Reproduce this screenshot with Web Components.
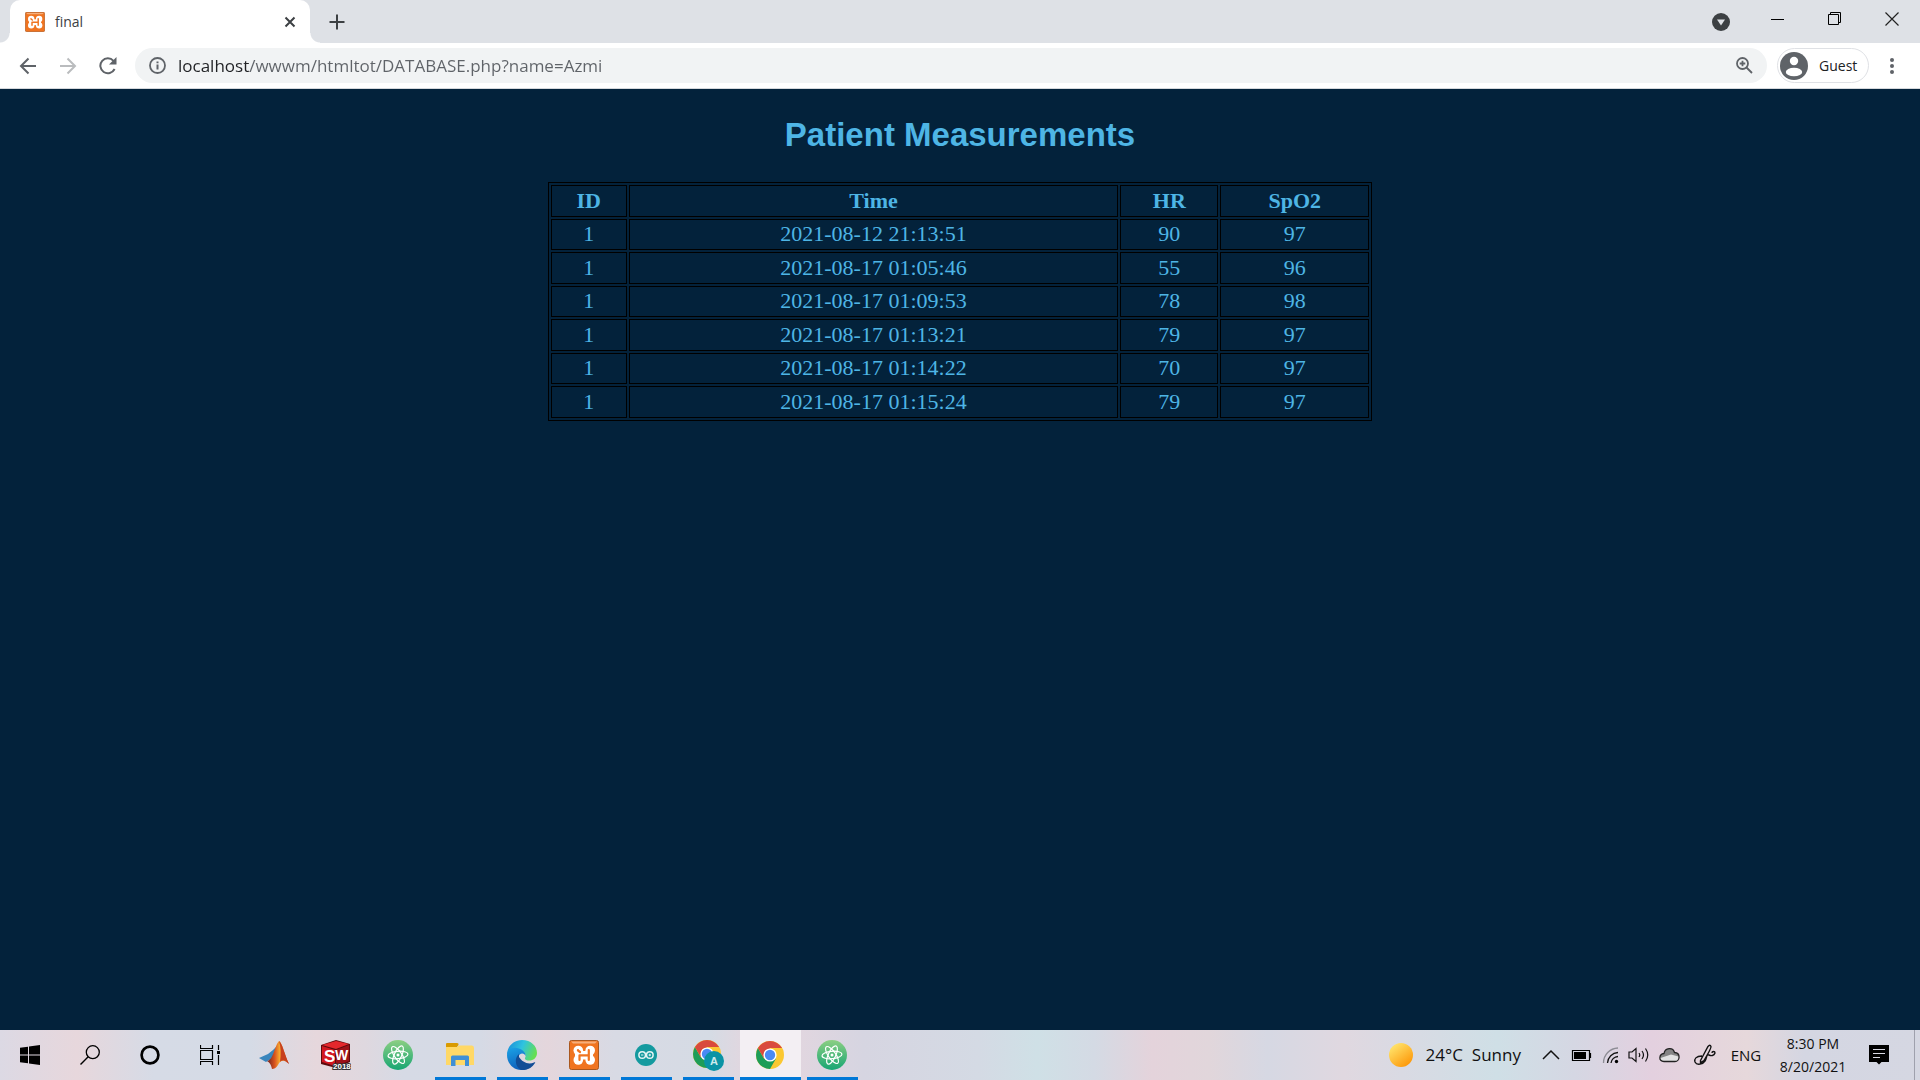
<!DOCTYPE html>
<html lang="en">
<head>
<meta charset="utf-8">
<title>final</title>
<style>
html,body{margin:0;height:100%}
body{font-family:"Open Sans","Noto Sans",sans-serif;background:#03223b;overflow:hidden}
</style>
</head>
<body>
<desktop-screen></desktop-screen>
<script>
function define(name, css, html){
  const t=document.createElement('template');
  t.innerHTML='<style>*{box-sizing:border-box}svg{display:block}button{font:inherit;color:inherit;background:none;border:0;padding:0;margin:0;display:flex;align-items:center;justify-content:center}'+css+'</style>'+html;
  customElements.define(name,class extends HTMLElement{
    constructor(){super();this.attachShadow({mode:'open'}).append(t.content.cloneNode(true));}
  });
}
const xampp='<svg width="100%" height="100%" viewBox="0 0 30 30"><rect x=".5" y=".5" width="29" height="29" rx="2" fill="#f07420" stroke="#a9571f"/><path d="M2 1.500H28L26 3.500H4Z" fill="#f9c9a2" opacity=".7"/><g fill="#fff"><circle cx="9.300" cy="10.500" r="4.800"/><circle cx="21.200" cy="10.500" r="4.800"/><circle cx="9.300" cy="20" r="4.800"/><circle cx="21.200" cy="20" r="4.800"/><rect x="6" y="11" width="18" height="8.500"/></g><path d="M9 10V10.500L11 12M19.800 10V20M10.500 15.300H19.800M10.500 15.300V20" fill="none" stroke="#f07420" stroke-width="2.200" stroke-linecap="round"/></svg>';
const atom='<svg width="30" height="30" viewBox="0 0 30 30"><defs><linearGradient id="a" x2="0" y2="1"><stop stop-color="#8ccf83"/><stop offset="1" stop-color="#17a673"/></linearGradient></defs><circle cx="15" cy="15" r="15" fill="url(#a)"/><g fill="none" stroke="#fff" stroke-width="1.200"><ellipse cx="15" cy="15" rx="10" ry="3.700" transform="rotate(-5 15 15)"/><ellipse cx="15" cy="15" rx="10" ry="3.700" transform="rotate(55 15 15)"/><ellipse cx="15" cy="15" rx="10" ry="3.700" transform="rotate(115 15 15)"/></g><circle cx="15" cy="15" r="1.500" fill="#fff"/></svg>';
const chrome='<svg width="28" height="28" viewBox="0 0 28 28"><circle cx="14" cy="14" r="14" fill="#fbc831"/><path d="M1.900 7A14 14 0 0 0 14 28L20 17.500L14 14L8 17.500Z" fill="#1d9d58"/><path d="M1.900 7A14 14 0 0 1 26.100 7H14L8 17.500Z" fill="#d94a3d"/><circle cx="14" cy="14" r="6.600" fill="#fff"/><circle cx="14" cy="14" r="5.200" fill="#4a8af4"/></svg>';

define('browser-tab',`
:host{display:flex;align-items:center;width:300px;height:43px;padding:0 13px 0 15px;margin-left:10px;background:#fff;border-radius:10px 10px 0 0;position:relative;color:#3c4043;font-size:14px;line-height:20px}
:host::before,:host::after{content:"";position:absolute;bottom:0;width:10px;height:10px}
:host::before{left:-10px;background:radial-gradient(circle at 0 0,#dee1e6 9px,#fff 10px)}
:host::after{right:-10px;background:radial-gradient(circle at 100% 0,#dee1e6 9px,#fff 10px)}
i{width:20px;height:20px;margin-right:10px}
span{flex:1}button{width:14px;height:20px}`,
`<i>${xampp}</i><span><slot></slot></span><button aria-label="Close tab"><svg width="12" height="12" viewBox="0 0 12 12"><path d="M1.500 1.500L10.500 10.500M10.500 1.500L1.500 10.500" stroke="#3c4043" stroke-width="2"/></svg></button>`);

define('tab-strip',`
:host{display:flex;height:43px;background:#dee1e6}
.plus{width:30px;height:43px;margin-left:12px}
.win{margin-left:auto;display:flex;height:38px}
.win button{width:57px;height:38px}
.win .down{width:56px;padding-top:5px}`,
`<browser-tab>final</browser-tab><button class="plus" aria-label="New tab"><svg width="16" height="16" viewBox="0 0 16 16"><path d="M8 .5V15.500M.5 8H15.500" stroke="#3c4043" stroke-width="2"/></svg></button>
<div class="win"><button class="down" aria-label="Search tabs"><svg width="18" height="18" viewBox="0 0 18 18"><circle cx="9" cy="9" r="9" fill="#3c4043"/><path d="M5 6.500H13L9 12.500Z" fill="#dee1e6"/></svg></button>
<button aria-label="Minimize"><svg width="14" height="14"><path d="M0 7.500H13" stroke="#000"/></svg></button>
<button aria-label="Restore"><svg width="14" height="14"><path d="M.5 2.500H10.500V12.500H.5ZM2.500 2.500V.5H12.500V10.500H10.500" fill="none" stroke="#000"/></svg></button>
<button aria-label="Close"><svg width="14" height="14"><path d="M.5 .5L13.500 13.500M13.500 .5L.5 13.500" stroke="#222" stroke-width="1.200"/></svg></button></div>`);

define('address-bar',`
:host{display:flex;align-items:center;height:46px;background:#fff;border-bottom:1px solid #d5d8dc;padding:0 16px 0 8px}
.nav{width:40px;height:36px}
.box{flex:1;display:flex;align-items:center;height:35px;border-radius:18px;background:#f1f3f4;margin:0 10px 0 7px;padding:0 14px}
input{flex:1;min-width:0;height:24px;margin:0 0 0 12px;padding:0;border:0;outline:0;font:inherit;font-size:17px;line-height:24px;color:#5f6368;-webkit-text-fill-color:transparent;background:linear-gradient(90deg,#202124 72px,#5f6368 72px);-webkit-background-clip:text;background-clip:text}
.guest{height:35px;width:92px;border:1px solid #dfe1e5;border-radius:18px;justify-content:flex-start;padding-left:2px;font-size:14px;line-height:20px;color:#202124;gap:11px}
.more{width:24px;height:36px;margin-left:11px}`,
`<button class="nav" aria-label="Back"><svg width="18" height="18" viewBox="0 0 18 18"><path d="M17 9H2M9.500 1.500L2 9L9.500 16.500" fill="none" stroke="#5f6368" stroke-width="2"/></svg></button>
<button class="nav" aria-label="Forward"><svg width="18" height="18" viewBox="0 0 18 18"><path d="M1 9H16M8.500 1.500L16 9L8.500 16.500" fill="none" stroke="#babcbe" stroke-width="2"/></svg></button>
<button class="nav" aria-label="Reload"><svg width="18" height="18" viewBox="0 0 18 18"><path d="M15.600 12A7.500 7.500 0 1 1 14.500 3.800L16 5.500" fill="none" stroke="#5f6368" stroke-width="2"/><path d="M17.500 0V7.500H10Z" fill="#5f6368"/></svg></button>
<div class="box"><svg width="17" height="17" viewBox="0 0 17 17"><circle cx="8.500" cy="8.500" r="7.500" fill="none" stroke="#5f6368" stroke-width="1.800"/><path d="M8.500 7.500V12.500M8.500 4.500V6.300" stroke="#5f6368" stroke-width="2"/></svg>
<input type="text" aria-label="Address" spellcheck="false" value="localhost/wwwm/htmltot/DATABASE.php?name=Azmi">
<button aria-label="Zoom"><svg width="17" height="17" viewBox="0 0 17 17"><circle cx="6.500" cy="6.500" r="5.500" fill="none" stroke="#5f6368" stroke-width="1.800"/><path d="M10.500 10.500L16 16M6.500 3.700V9.300M3.700 6.500H9.300" stroke="#5f6368" stroke-width="1.800"/></svg></button></div>
<button class="guest"><svg width="28" height="28" viewBox="0 0 28 28"><circle cx="14" cy="14" r="14" fill="#5f6368"/><circle cx="14" cy="9" r="4.200" fill="#fff"/><ellipse cx="14" cy="20" rx="8.200" ry="4.300" fill="#fff"/></svg>Guest</button>
<button class="more" aria-label="Menu"><svg width="4" height="16" viewBox="0 0 4 16"><g fill="#5f6368"><circle cx="2" cy="2" r="2"/><circle cx="2" cy="8" r="2"/><circle cx="2" cy="14" r="2"/></g></svg></button>`);

const rows=[['2021-08-12 21:13:51',90,97],['2021-08-17 01:05:46',55,96],['2021-08-17 01:09:53',78,98],['2021-08-17 01:13:21',79,97],['2021-08-17 01:14:22',70,97],['2021-08-17 01:15:24',79,97]];
define('patient-page',`
:host{display:block;color:#4eb5e5;font-family:"Liberation Serif",serif}
h1{margin:26px 0 27px;text-align:center;font:bold 33px/40px "Liberation Sans",sans-serif}
table{width:calc(43% - 1px);margin:0 auto;border:1px solid #000;border-spacing:2px;table-layout:fixed;text-align:center;font-size:22px;line-height:24px}
th,td{border:1px solid #000;padding:0;height:32px}
tr:nth-child(even) td{height:31px;padding-bottom:2px}
.id{width:76px}.hr{width:98px}.sp{width:149px}`,
`<h1>Patient Measurements</h1><table><tbody><tr><th class="id">ID</th><th>Time</th><th class="hr">HR</th><th class="sp">SpO2</th></tr>${rows.map(r=>'<tr><td>1</td>'+r.map(c=>'<td>'+c+'</td>').join('')+'</tr>').join('')}</tbody></table>`);

define('task-button',`
:host{display:flex;width:62px;height:50px}
button{width:100%;height:100%;position:relative}
:host([app]) button::after{content:"";position:absolute;left:6px;right:5px;bottom:0;height:3px;background:#0078d7}
:host([active]){background:linear-gradient(#f3eff3,#f3eff3) 1px 0/61px 100% no-repeat}
:host([active]) button::after{left:1px;right:0}
:host([shell]){width:60px}`,
`<button><slot></slot></button>`);

define('task-bar',`
:host{display:flex;height:50px;color:#111;font-size:15px;line-height:22px;background:linear-gradient(90deg,#dcd9e4 0,#e7d7dc 4%,#d6dbe6 8%,#d5dbe6 13%,#e6d7dc 16.500%,#dfd8df 19%,#d6dae5 21%,#d5dae5 25%,#e4d6dc 28.500%,#d8dae4 32%,#d5dbe4 37%,#e3d6df 39%,#e3d6df 41%,#d6d5e1 45%,#d4dae4 51%,#cfe0e6 54%,#d4dae4 57%,#e4d3db 60%,#e1d6db 63%,#d6d8e3 66%,#e0d8e0 70%,#d9dae3 73%,#cfdfe6 78%,#d5d7e3 82%,#e3d0df 86%,#e6d8db 91%,#d4d6e2 94%,#d5d7e2 100%)}
.shell,.apps,.tray{display:flex}.apps{margin-left:3px}
.tray{margin-left:auto;align-items:center}
.weather{font-size:17px;line-height:24px;gap:13px;margin-right:21px}
.weather span{white-space:pre}
.icons{display:flex;align-items:center;gap:9px}
.pen{margin-left:4px}
.lang{margin-left:12px;width:34px}
.clock{flex-direction:column;width:76px;margin-left:12px;height:50px}
.clock time{display:block;line-height:23px;font-size:14px}
.note{width:56px;height:50px;margin-right:7px}
.desk{width:6px;height:50px;border-left:1px solid #9fa1ad}`,
`<div class="shell">
<task-button shell><svg width="20" height="20" viewBox="0 0 20 20"><path d="M0 2.800L8 1.700V9.500H0ZM9 1.500L20 0V9.500H9ZM0 10.500H8V18.300L0 17.200ZM9 10.500H20V20L9 18.500Z"/></svg></task-button>
<task-button shell><svg width="20" height="20" viewBox="0 0 20 20"><circle cx="12.800" cy="7.200" r="6.500" fill="none" stroke="#000" stroke-width="1.300"/><path d="M8.200 11.800L.5 19.500" stroke="#000" stroke-width="1.400"/></svg></task-button>
<task-button shell><svg width="20" height="20" viewBox="0 0 20 20"><circle cx="10" cy="10" r="8.400" fill="none" stroke="#000" stroke-width="2.700"/></svg></task-button>
<task-button shell><svg width="20" height="20" viewBox="0 0 20 20"><path d="M.5 0V3.500H12.500V0M.5 5.500H12.500V14.500H.5ZM.5 20V16.500H12.500V20M18.500 0V5M18.500 10V20" fill="none" stroke="#000" stroke-width="1.200"/><path d="M17 6H20V9H17Z"/></svg></task-button></div>
<div class="apps">
<task-button><svg width="30" height="28" viewBox="0 0 30 28"><defs><linearGradient id="m" x1="0" x2="1"><stop stop-color="#6b2020"/><stop offset=".35" stop-color="#d9541e"/><stop offset=".6" stop-color="#f9b233"/><stop offset="1" stop-color="#b02a18"/></linearGradient></defs><path d="M0 17L9 13L14 9L18 5L13 17L7 21Z" fill="#3a86bd"/><path d="M7 21L13 17L17 8Q19 1 21 1L15 20L10 19Z" fill="#55263a"/><path d="M20 0C23 1 26 15 30 23C26 19 22 18 19 24C17 27 15 28 13 28C12 23 10 21 8 20C14 20 16 4 20 0Z" fill="url(#m)"/><path d="M20 0C23 1 26 15 30 23C26 18 23 19 21 21C22 13 22 6 20 0Z" fill="#c7401f"/></svg></task-button>
<task-button><svg width="30" height="30" viewBox="0 0 30 30"><path d="M0 5L15 0L29 4V22L15 28L0 24Z" fill="#5c0a0d"/><path d="M1 5L15 1L28 4L15 9Z" fill="#e4272c"/><path d="M1 6L14 10V26L1 22Z" fill="#d3171f"/><path d="M15 10L28 5V21L15 26Z" fill="#9d1218"/><text x="3" y="22" font-family="Liberation Sans" font-weight="700" font-size="17" fill="#fff">S</text><text x="14" y="20" font-family="Liberation Sans" font-weight="700" font-size="14" fill="#fff">W</text><text x="12" y="29" font-family="Liberation Sans" font-weight="700" font-size="8" fill="#fff" stroke="#333" stroke-width="2" paint-order="stroke">2018</text></svg></task-button>
<task-button>${atom}</task-button>
<task-button app><svg width="28" height="24" viewBox="0 0 28 24"><path d="M0 1Q0 0 1 0H11Q13 0 12.500 2L11 4H0Z" fill="#d99a00"/><path d="M0 4H11L13 2.500H26Q28 2.500 28 5V22H0Z" fill="#ffd866"/><path d="M5 14Q5 12.500 6.500 12.500H21.500Q23 12.500 23 14V23H19V17H9.500V23H5Z" fill="#3f8fd5"/></svg></task-button>
<task-button app><svg width="30" height="30" viewBox="0 0 30 30"><defs><linearGradient id="e1" x1="0" y1=".2" x2="1" y2=".5"><stop stop-color="#1b8fd9"/><stop offset=".5" stop-color="#2fc3e0"/><stop offset="1" stop-color="#66df50"/></linearGradient><linearGradient id="e2" x2=".3" y2="1"><stop stop-color="#1ba3e6"/><stop offset="1" stop-color="#0f62bd"/></linearGradient></defs><path d="M0 15C0 6 7 0 15 0C24 0 30 6 30 13C30 18 26 20.500 22.500 20.500C19 20.500 17.500 19 18 18C19 17 19.500 12 14 11C8 10 3 12 0 15Z" fill="url(#e1)"/><path d="M0 15C1 8 6 7 10 8C15 9 19 12 18.500 16C17 12 12 13 11.500 17C10 24 17 28 22 28C19 30 16 30 14 30C6 30 0 23 0 15Z" fill="url(#e2)"/><path d="M12 14C7 18 8 27 14 30C20 30.500 25 28 28 23C28.500 22 28 22 27 22.500C21 25 15 22 12 17Z" fill="#114d96"/></svg></task-button>
<task-button app><svg width="30" height="30">${xampp}</svg></task-button>
<task-button app><svg width="22" height="22" viewBox="0 0 22 22"><circle cx="11" cy="11" r="11" fill="#149a9f"/><g fill="none" stroke="#e4f4f4" stroke-width="1.500"><circle cx="7.200" cy="11" r="3.300"/><circle cx="14.800" cy="11" r="3.300"/></g><path d="M6 11H8.400M13.600 11H16M14.800 9.800V12.200" stroke="#e4f4f4"/></svg></task-button>
<task-button app><svg width="31" height="31" viewBox="0 0 31 31">${chrome}<circle cx="21" cy="21" r="10" fill="#0a93a5"/><text x="21" y="25" text-anchor="middle" font-family="Liberation Sans" font-weight="700" font-size="11" fill="#cdeaec">A</text></svg></task-button>
<task-button app active>${chrome}</task-button>
<task-button app>${atom}</task-button></div>
<div class="tray">
<button class="weather"><svg width="24" height="24" viewBox="0 0 24 24"><defs><linearGradient id="s" x1=".2" y1=".1" x2=".8" y2=".9"><stop stop-color="#ffe168"/><stop offset="1" stop-color="#fd9a0c"/></linearGradient></defs><circle cx="12" cy="12" r="12" fill="url(#s)"/></svg><span>24°C  Sunny</span></button>
<div class="icons">
<svg width="18" height="18" viewBox="0 0 18 18"><path d="M1 13L9 5L17 13" fill="none" stroke="#111" stroke-width="1.500"/></svg>
<svg width="24" height="18" viewBox="0 0 24 18"><path d="M3.500 4.500H20.500V14.500H3.500ZM21.500 7V12" fill="none" stroke="#000" stroke-width="1.200"/><path d="M5 6H17V13H5Z"/></svg>
<svg width="17" height="18" viewBox="0 0 17 18"><g fill="none" stroke="#111" stroke-width="1.300"><path d="M1.500 17A15 15 0 0 1 16 2" stroke="#8c8c94"/><path d="M5.500 17A11 11 0 0 1 16 6.500M9 17A7.500 7.500 0 0 1 16 10.500"/></g><circle cx="14.500" cy="15.500" r="1.700"/></svg>
<svg width="22" height="18" viewBox="0 0 22 18"><path d="M1 6H4L8 2.500V15.500L4 12H1ZM11 7Q12.500 9 11 11M14 5Q17 9 14 13M17.500 2.500Q22 9 17.500 15.500" fill="none" stroke="#111" stroke-width="1.200"/></svg>
<svg width="21" height="18" viewBox="0 0 21 18"><path d="M5 15.500C-1 15.500 0 8 5 7.500C6 1.500 14 1 15.500 6.500C22 7 21 15.500 16 15.500Z" fill="#e2e2e2"/><path d="M1.500 12C1 9 3 7.500 5 7.500C6 1.500 14 1 15.500 6.500Q19 7 19.500 10.500L12 8.500Z" fill="#858585"/><path d="M5 15.500C-1 15.500 0 8 5 7.500C6 1.500 14 1 15.500 6.500C22 7 21 15.500 16 15.500Z" fill="none" stroke="#222" stroke-width="1.300"/></svg>
<svg class="pen" width="24" height="22" viewBox="0 0 24 22"><path d="M7.500 16.500L15 2.500Q17 0 18 2.500Q18.500 4 11 16.500L7.500 18.500ZM9 12C3 12 1 15 2 18C4 22 10 20 12 17C14 14 13 10 16 11C18 12 21 12 22 9C22 7 19 7 19 9" fill="none" stroke="#111" stroke-width="1.400"/></svg></div>
<button class="lang">ENG</button>
<button class="clock"><time>8:30 PM</time><time>8/20/2021</time></button>
<button class="note" aria-label="Notifications"><svg width="20" height="20" viewBox="0 0 20 20"><path d="M0 0H20V17H12.500L10 19.500L7.500 17H0Z"/><path d="M4 4.500H16M4 8.500H16M4 12.500H11" stroke="#d8d8e2" stroke-width="1.200"/></svg></button>
<div class="desk"></div></div>`);

define('desktop-screen',`
:host{display:flex;flex-direction:column;height:100vh}
patient-page{flex:1}`,
`<tab-strip></tab-strip><address-bar></address-bar><patient-page></patient-page><task-bar></task-bar>`);
</script>
</body>
</html>
